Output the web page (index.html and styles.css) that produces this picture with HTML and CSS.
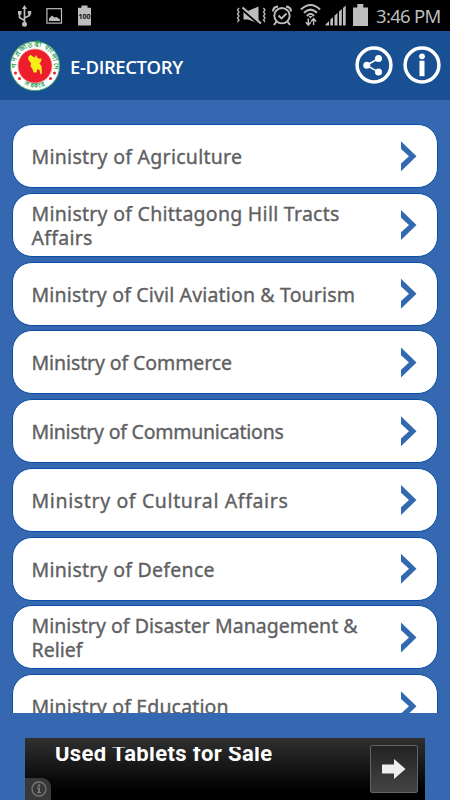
FILE: index.html
```
<!DOCTYPE html>
<html lang="en">
<head>
  <meta charset="UTF-8" />
  <meta name="viewport" content="width=device-width, initial-scale=1.0"/>
  <title>E-Directory</title>
  <link rel="stylesheet" href="styles.css">
</head>
<body>
  <div class="statusbar">
    <svg class="status-left" width="110" height="31" viewBox="0 0 110 31" fill="none" stroke="#bdbdbd" stroke-width="1.4">
      <!-- usb -->
      <path d="M24.5 8V24M24.5 20.5L19.5 17.5V13M24.5 18L29.5 15.5V12" stroke-width="1.7"/>
      <path d="M24.5 5L27 9H22Z" fill="#bdbdbd" stroke="none"/>
      <circle cx="24.5" cy="24.3" r="2.5" fill="#bdbdbd" stroke="none"/>
      <path d="M18 11h3.5v3.5H18zM27.8 11h3.4v3.4h-3.4z" fill="#bdbdbd" stroke="none"/>
      <!-- picture -->
      <rect x="46.9" y="8.7" width="14.6" height="14.4" stroke-width="1.2"/>
      <path d="M49 21V18.5L52 15.5L54.5 17.5L56.5 17L60 19.5V21Z" fill="#bdbdbd" stroke="none"/>
      <!-- battery level -->
      <path d="M81.5 5.5h6v2.3H91V25.5H78V7.8h3.5z" fill="#bdbdbd" stroke="none"/>
      <text class="battery-text" x="84.5" y="18.7">100</text>
    </svg>
    <div class="status-right">
      <svg width="140" height="31" viewBox="235 0 140 31" fill="none" stroke="#bdbdbd" stroke-width="1.4">
        <!-- muted / vibrate -->
        <path d="M239 8l-1.5 2 1.5 2-1.5 2 1.5 2-1.5 2 1.5 2-1.5 2M263.5 8l1.5 2-1.5 2 1.5 2-1.5 2 1.5 2-1.5 2 1.5 2" stroke-width="1.3"/>
        <path d="M243.5 11H248L258.5 6.5V23.5L248 19.5H243.5Z" fill="#bdbdbd" stroke="none"/>
        <path d="M242 9.5L260 25" stroke="#000" stroke-width="2"/>
        <path d="M242.5 7.5L261 23.5" stroke-width="2"/>
        <!-- alarm -->
        <circle cx="282" cy="15.7" r="7.7" stroke-width="1.9"/>
        <path d="M278.5 15.5L281.5 18.500L286.5 13.5" stroke-width="1.8"/>
        <path d="M273 11.5Q273 7 278 6.500M291 11.5Q291 7 286 6.5M276.5 21.5L274 25M287.5 21.5L290 25" stroke-width="2"/>
        <!-- wifi -->
        <path d="M301 9.5Q310.5 .5 320 9.5M304 12.8Q310.5 6.5 317 12.800M307 16Q310.5 11.5 314 16" stroke-width="2.1"/>
        <path d="M308.5 16h4l-2 2.500z" fill="#bdbdbd" stroke="none"/>
        <path d="M308.3 18.5V25M305.8 22.2L308.3 25L310.8 22.2M313.6 25V18.7M311 21.5L313.6 18.7L316.2 21.5" stroke-width="1.5"/>
        <!-- signal -->
        <path d="M325.5 25.5V24.5L329 21V25.500ZM330.3 25.5V19.5L333 17.2V25.5ZM334.5 25.5V15.8L337.5 12.8V25.5ZM339 25.5V11.5L341.8 9V25.5ZM343 25.5V8L345.7 5.5V25.5Z" fill="#bdbdbd" stroke="none"/>
        <!-- battery -->
        <path d="M357.3 4h6v3.500H368V26H353V7.5h4.3z" fill="#bdbdbd" stroke="none"/>
      </svg>
      <span class="clock">3:46 PM</span>
    </div>
  </div>

  <header class="header">
    <svg class="logo" width="52" height="52" viewBox="0 0 52 52">
      <defs>
        <path id="arcTop" d="M7.5 31.5A19.3 19.3 0 1 1 44.5 31.5"/>
        <path id="arcBottom" d="M12 43A21.8 21.8 0 0 0 40 43"/>
      </defs>
      <circle cx="26" cy="26" r="24.6" fill="#fff" stroke="#45a36c" stroke-width="1"/>
      <circle cx="26" cy="26" r="17" fill="#ee1d2b" stroke="#f59b96" stroke-width=".8"/>
      <path d="M19.2 17L21.5 14.8L24.5 17L26.5 17.5L26 15.5L27.5 15.8L29 18.5L32.5 18.5L32 21.5L30.5 23.5L32.5 26L33 33.5L31.5 34.5L30.5 30L28.5 29L27.5 32.5L24.5 32.5L23.5 29L21.5 26.5L22 23L19.5 20Z" fill="#f5ee1b"/>
      <g fill="#ee1d2b">
        <circle cx="6.5" cy="33" r="1.5"/><circle cx="10.500" cy="38.5" r="1.5"/>
        <circle cx="45.5" cy="33" r="1.5"/><circle cx="41.5" cy="38.5" r="1.5"/>
      </g>
      <text class="logo-text"><textPath href="#arcTop" textLength="70" startOffset="4">গণপ্রজাতন্ত্রী বাংলাদেশ</textPath></text>
      <text class="logo-text"><textPath href="#arcBottom" textLength="22" startOffset="4">সরকার</textPath></text>
    </svg>
    <h1 class="title">E-DIRECTORY</h1>
    <div class="actions">
      <svg width="38" height="38" viewBox="0 0 38 38" fill="#fff">
        <circle cx="19" cy="19" r="16.9" fill="none" stroke="#fff" stroke-width="3.5"/>
        <path d="M23.5 12.5L11.5 19.3L23.5 26" fill="none" stroke="#fff" stroke-width="1.5"/>
        <circle cx="23.5" cy="12.5" r="3.5"/><circle cx="11.8" cy="19.3" r="3.5"/><circle cx="23.5" cy="26" r="3.5"/>
      </svg>
      <svg width="38" height="38" viewBox="0 0 38 38" fill="#fff">
        <circle cx="19" cy="19" r="16.9" fill="none" stroke="#fff" stroke-width="3.5"/>
        <circle cx="19" cy="10.3" r="2.9"/>
        <rect x="16.5" y="14.7" width="5" height="15.5"/>
      </svg>
    </div>
  </header>

  <main class="list">
    <a class="item wide"><span>Ministry of Agriculture</span><i class="arrow"></i></a>
    <a class="item wide"><span>Ministry of Chittagong Hill Tracts<br>Affairs</span><i class="arrow"></i></a>
    <a class="item"><span>Ministry of Civil Aviation &amp; Tourism</span><i class="arrow"></i></a>
    <a class="item tight"><span>Ministry of Commerce</span><i class="arrow"></i></a>
    <a class="item tighter"><span>Ministry of Communications</span><i class="arrow"></i></a>
    <a class="item wider"><span>Ministry of Cultural Affairs</span><i class="arrow"></i></a>
    <a class="item wide"><span>Ministry of Defence</span><i class="arrow"></i></a>
    <a class="item even"><span>Ministry of Disaster Management &amp;<br>Relief</span><i class="arrow"></i></a>
    <a class="item"><span>Ministry of Education</span><i class="arrow"></i></a>
  </main>

  <div class="ad">
    <div class="ad-text">Used Tablets for Sale</div>
    <div class="ad-button">
      <svg width="24" height="20" viewBox="0 0 24 20"><path d="M0 5.5H12V0L23.5 10L12 20V14.5H0Z" fill="#eee"/></svg>
    </div>
    <div class="ad-info">
      <svg width="16" height="16" viewBox="0 0 16 16" fill="#777">
        <circle cx="8" cy="8" r="7" fill="none" stroke="#777" stroke-width="1.3"/>
        <circle cx="8" cy="4.5" r="1.2"/>
        <path d="M6 6.500h3v4.500h1v1.200H6V11h1V7.600H6z"/>
      </svg>
    </div>
  </div>
</body>
</html>
```
FILE: styles.css
```
* { margin: 0; padding: 0; box-sizing: border-box; }
body {
  display: flex;
  flex-direction: column;
  height: 800px;
  overflow: hidden;
  background-color: #3568b0;
  font-family: 'Noto Sans', sans-serif;
}
.statusbar {
  display: flex;
  justify-content: space-between;
  flex: none;
  height: 31px;
  background: #000;
}
.status-right {
  display: flex;
  width: 215px;
}
.status-right svg { flex: none; }
.battery-text {
  font: bold 7px 'Open Sans', sans-serif;
  fill: #111;
  stroke: none;
  text-anchor: middle;
}
.clock {
  padding-left: 1px;
  color: #bdbdbd;
  font-size: 18.5px;
  line-height: 31px;
  letter-spacing: -0.7px;
  white-space: nowrap;
}
.header {
  display: flex;
  align-items: center;
  flex: none;
  height: 69px;
  padding: 0 9px;
  background: #194f93;
}
.logo-text {
  font-size: 6.5px;
  font-weight: bold;
  fill: #15994c;
}
.title {
  margin: 2px 0 0 9px;
  color: #fff;
  font: 600 18.5px/24px 'Open Sans', sans-serif;
  letter-spacing: -0.4px;
}
.actions {
  display: flex;
  gap: 10px;
  margin: 0 0.5px 1px auto;
}
.list {
  display: flex;
  flex-direction: column;
  gap: 4.75px;
  flex: none;
  height: 613px;
  padding: 24.2px 12px 0;
  overflow: hidden;
}
.item {
  display: flex;
  align-items: center;
  justify-content: space-between;
  flex: none;
  height: 64px;
  padding: 0 20.5px 0 18.5px;
  border: 1px solid #0b4da2;
  border-radius: 20px;
  background: #fff;
  color: #606062;
  font-size: 19.5px;
  line-height: 24.3px;
  letter-spacing: 0.16px;
  white-space: nowrap;
  -webkit-text-stroke: 0.35px #606062;
}
.item span { padding-top: 2px; }
.item.wide { letter-spacing: 0.27px; }
.item.wider { letter-spacing: 0.63px; }
.item.even { letter-spacing: 0.03px; }
.item.tight { letter-spacing: -0.1px; }
.item.tighter { letter-spacing: -0.23px; }
.arrow {
  width: 16px;
  height: 31px;
  background: #3369b1;
  clip-path: polygon(0 0, 100% 50%, 0 100%, 0 75%, 53% 50%, 0 25%);
}
.ad {
  position: relative;
  display: flex;
  justify-content: space-between;
  flex: none;
  width: 400px;
  height: 62px;
  margin: 25px auto 0;
  padding: 7px 7px 0 30px;
  background: linear-gradient(#303030, #000 85%);
}
.ad-text {
  height: 30px;
  margin-top: 2px;
  overflow: hidden;
  color: #fff;
  font: bold 22px/14px Roboto, sans-serif;
  letter-spacing: 0.36px;
}
.ad-button {
  display: flex;
  align-items: center;
  justify-content: center;
  width: 48px;
  height: 48px;
  border: 1px solid #646464;
  border-radius: 2px;
  background: linear-gradient(#222, #444);
}
.ad-info {
  position: absolute;
  left: 0;
  bottom: 0;
  width: 26px;
  height: 22px;
  padding: 2px 0 0 6px;
  border-radius: 0 9px 0 0;
  background: #383838;
}
```
